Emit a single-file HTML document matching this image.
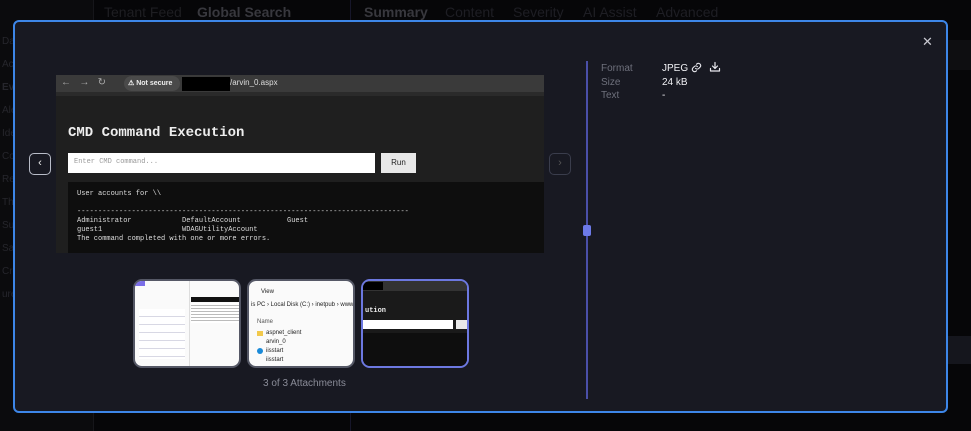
<!DOCTYPE html>
<html><head><meta charset="utf-8"><style>
*{margin:0;padding:0;box-sizing:border-box}
body{width:971px;height:431px;background:#060608;overflow:hidden;position:relative;font-family:"Liberation Sans",sans-serif}
.bg{position:absolute;color:#1e1e24;font-size:14px}
.modal{position:absolute;left:13px;top:20px;width:935px;height:393px;background:#181922;border:2px solid #3d86e8;border-radius:6px}
.a{position:absolute}
.mono{font-family:"Liberation Mono",monospace}
</style></head><body>
<div class="bg" style="left:0;top:0;width:93px;height:431px;background:#0b0b0d"></div>
<div class="bg" style="left:93px;top:0;width:1px;height:431px;background:#16161a"></div>
<div class="bg" style="left:350px;top:0;width:1px;height:431px;background:#16162a"></div>
<div class="bg" style="left:104px;top:4px;font-size:14px;color:#1e1e22">Tenant Feed</div>
<div class="bg" style="left:197px;top:4px;font-size:14px;font-weight:bold;color:#38383e">Global Search</div>
<div class="bg" style="left:364px;top:4px;font-size:14px;font-weight:bold;color:#38383e">Summary</div>
<div class="bg" style="left:445px;top:4px;font-size:14px">Content</div>
<div class="bg" style="left:513px;top:4px;font-size:14px">Severity</div>
<div class="bg" style="left:583px;top:4px;font-size:14px">AI Assist</div>
<div class="bg" style="left:656px;top:4px;font-size:14px">Advanced</div>
<div class="bg" style="left:948px;top:40px;width:23px;height:30px;background:#0e0e11"></div>
<div class="bg" style="left:948px;top:336px;width:23px;height:28px;background:#15161d"></div>
<div class="bg" style="left:2px;top:30px;font-size:10px;line-height:23px;color:#26262c">Da<br>Ac<br><b>Eve</b><br>Ale<br>Ide<br>Co<br>Re<br>Th<br>Su<br>Sa<br>Cre<br>ure</div>

<div class="modal">
 <div class="a" style="left:907px;top:12px;color:#c8c8d0;font-size:13px">✕</div>
 <div class="a" style="left:41px;top:53px;width:488px;height:178px;background:#1f1f1f;overflow:hidden">
  <div class="a" style="left:0;top:0;width:488px;height:17px;background:#3a3a3a"></div>
  <div class="a" style="left:0;top:17px;width:488px;height:4px;background:#2a2a2a"></div>
  <div class="a" style="left:5px;top:2px;color:#aaa;font-size:10px">←&nbsp;&nbsp;&nbsp;→&nbsp;&nbsp;&nbsp;↻</div>
  <div class="a" style="left:68px;top:1px;width:56px;height:15px;background:#4a4a4a;border-radius:8px;color:#eee;font-size:7px;padding:3px 4px;white-space:nowrap;font-weight:bold">⚠ Not secure</div>
  <div class="a" style="left:126px;top:2px;width:48px;height:14px;background:#000"></div>
  <div class="a" style="left:174px;top:3px;color:#ddd;font-size:8px">/arvin_0.aspx</div>
  <div class="a mono" style="left:12px;top:50px;color:#eee;font-size:14px;font-weight:bold">CMD Command Execution</div>
  <div class="a mono" style="left:12px;top:78px;width:307px;height:20px;background:#fff;color:#999;font-size:7px;padding:5px 6px">Enter CMD command...</div>
  <div class="a" style="left:325px;top:78px;width:35px;height:20px;background:#e8e8e8;color:#222;font-size:8px;text-align:center;line-height:20px">Run</div>
  <div class="a mono" style="left:12px;top:107px;width:476px;height:71px;background:#0e0e0e;color:#ddd;font-size:7px;padding:8px 9px;line-height:9px;white-space:pre">User accounts for \\

-------------------------------------------------------------------------------
Administrator            DefaultAccount           Guest
guest1                   WDAGUtilityAccount
The command completed with one or more errors.</div>
 </div>
 <div class="a" style="left:14px;top:131px;width:22px;height:22px;border:1.5px solid #b8bcc8;border-radius:5px;color:#eee;font-size:11px;text-align:center;line-height:19px">‹</div>
 <div class="a" style="left:534px;top:131px;width:22px;height:22px;border:1.5px solid #3a3d4c;border-radius:5px;color:#555;font-size:11px;text-align:center;line-height:19px">›</div>
 <div class="a" style="left:118px;top:257px;width:108px;height:89px;background:#fafafa;border:2px solid #555866;border-radius:9px;overflow:hidden">
  <div class="a" style="left:54px;top:0;width:1px;height:89px;background:#ddd"></div>
  <div class="a" style="left:0;top:0;width:10px;height:5px;background:#7b6ee8"></div>
  <div class="a" style="left:56px;top:16px;width:48px;height:5px;background:#111"></div>
  <div class="a" style="left:56px;top:22px;width:48px;height:20px;background:repeating-linear-gradient(#fff 0 2px,#bbb 2px 3px)"></div>
  <div class="a" style="left:4px;top:28px;width:46px;height:50px;background:repeating-linear-gradient(#fff 0 7px,#d8d8e4 7px 8px)"></div>
 </div>
 <div class="a" style="left:232px;top:257px;width:108px;height:89px;background:#fafafa;border:2px solid #555866;border-radius:9px;overflow:hidden;font-size:6px;color:#222">
  <div class="a" style="left:12px;top:8px">View</div>
  <div class="a" style="left:2px;top:21px;white-space:nowrap">is PC › Local Disk (C:) › inetpub › www</div>
  <div class="a" style="left:8px;top:38px;color:#555">Name</div>
  <div class="a" style="left:8px;top:50px;width:6px;height:5px;background:#f2c94c"></div>
  <div class="a" style="left:17px;top:49px">aspnet_client</div>
  <div class="a" style="left:17px;top:58px">arvin_0</div>
  <div class="a" style="left:8px;top:67px;width:6px;height:6px;background:#1a8ad8;border-radius:50%"></div>
  <div class="a" style="left:17px;top:67px">iisstart</div>
  <div class="a" style="left:17px;top:76px">iisstart</div>
 </div>
 <div class="a" style="left:346px;top:257px;width:108px;height:89px;background:#1a1a1a;border:2px solid #6c78e0;border-radius:9px;overflow:hidden">
  <div class="a" style="left:0;top:0;width:108px;height:10px;background:#333"></div>
  <div class="a" style="left:0;top:1px;width:20px;height:8px;background:#000"></div>
  <div class="a mono" style="left:2px;top:26px;color:#eee;font-size:7px;font-weight:bold">ution</div>
  <div class="a" style="left:0;top:39px;width:90px;height:9px;background:#fff"></div>
  <div class="a" style="left:93px;top:39px;width:15px;height:9px;background:#e8e8e8"></div>
  <div class="a" style="left:0;top:52px;width:108px;height:37px;background:#0e0e0e"></div>
 </div>
 <div class="a" style="left:248px;top:356px;color:#8a8c98;font-size:10px">3 of 3 Attachments</div>
 <div class="a" style="left:571px;top:39px;width:2px;height:338px;background:#4a4fa8"></div>
 <div class="a" style="left:568px;top:203px;width:8px;height:11px;background:#6d7ae8;border-radius:2px"></div>
 <div class="a" style="left:586px;top:40px;color:#6e707c;font-size:10px;line-height:13.5px">Format<br>Size<br>Text</div>
 <div class="a" style="left:647px;top:40px;color:#f0f0f4;font-size:10px;line-height:13.5px">JPEG<br>24 kB<br>-</div>
 <svg class="a" style="left:676px;top:40px" width="11" height="11" viewBox="0 0 24 24" fill="none" stroke="#e8e8ee" stroke-width="2.4" stroke-linecap="round"><path d="M10 14a5 5 0 0 0 7 0l3-3a5 5 0 0 0-7-7l-1 1"/><path d="M14 10a5 5 0 0 0-7 0l-3 3a5 5 0 0 0 7 7l1-1"/></svg>
 <svg class="a" style="left:694px;top:39px" width="12" height="12" viewBox="0 0 24 24" fill="none" stroke="#e8e8ee" stroke-width="2.4" stroke-linecap="round" stroke-linejoin="round"><path d="M12 3v12M7 10l5 5 5-5M3 15v5h18v-5"/></svg>
</div>
</body></html>
